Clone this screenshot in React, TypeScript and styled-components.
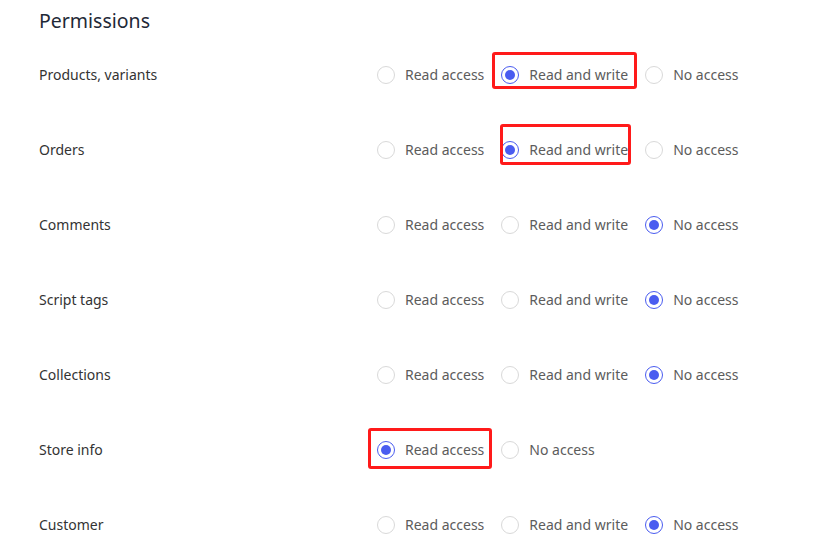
import styled, { createGlobalStyle, css } from "styled-components";

const GlobalStyle = createGlobalStyle`
	body {
		margin: 0;
		background: #ffffff;
		font-family: "Noto Sans", "Open Sans", sans-serif;
	}
`;

type Level = "read" | "write" | "none";

interface Permission {
	label: string;
	options: Level[];
	value: Level;
	marked?: boolean;
}

const optionText: Record<Level, string> = {
	read: "Read access",
	write: "Read and write",
	none: "No access",
};

const permissions: Permission[] = [
	{ label: "Products, variants", options: ["read", "write", "none"], value: "write", marked: true },
	{ label: "Orders", options: ["read", "write", "none"], value: "write", marked: true },
	{ label: "Comments", options: ["read", "write", "none"], value: "none" },
	{ label: "Script tags", options: ["read", "write", "none"], value: "none" },
	{ label: "Collections", options: ["read", "write", "none"], value: "none" },
	{ label: "Store info", options: ["read", "none"], value: "read", marked: true },
	{ label: "Customer", options: ["read", "write", "none"], value: "none" },
];

const App = () => {
	return (
		<Page>
			<GlobalStyle />
			<Title>Permissions</Title>
			<List>
				{permissions.map((perm, i) => (
					<Row key={perm.label}>
						<Label>{perm.label}</Label>
						<Group>
							{perm.options.map((opt) => {
								const checked = opt === perm.value;
								return (
									<Option key={opt} $marked={checked && perm.marked} $variant={i}>
										<Radio $checked={checked} />
										<OptionText>{optionText[opt]}</OptionText>
									</Option>
								);
							})}
						</Group>
					</Row>
				))}
			</List>
		</Page>
	);
};

export default App;

const Page = styled.div`
	padding: 8px 39px 0;
`;

const Title = styled.h2`
	margin: 0;
	font-size: 19.5px;
	font-weight: 400;
	color: #1f2937;
	line-height: 26px;
`;

const List = styled.div`
	display: flex;
	flex-direction: column;
	padding-top: 3px;
`;

const Row = styled.div`
	display: grid;
	grid-template-columns: 338px 1fr;
	align-items: center;
	height: 75px;
`;

const Label = styled.div`
	font-size: 14px;
	color: #333333;
`;

const Group = styled.div`
	display: flex;
	align-items: center;
	gap: 17px;
`;

const Option = styled.label<{ $marked?: boolean; $variant: number }>`
	position: relative;
	display: flex;
	align-items: center;
	gap: 10px;
	cursor: pointer;

	${({ $marked, $variant }) =>
		$marked &&
		css`
			&::after {
				content: "";
				position: absolute;
				border: 3px solid #ff1a1a;
				border-radius: 3px;
				${$variant === 0 &&
				css`
					left: -9px;
					right: -9px;
					top: -13px;
					bottom: -5px;
				`}
				${$variant === 1 &&
				css`
					left: -1px;
					right: -3px;
					top: -16px;
					bottom: -6px;
				`}
				${$variant === 5 &&
				css`
					left: -9px;
					right: -8px;
					top: -12px;
					bottom: -10px;
				`}
			}
		`}
`;

const Radio = styled.span<{ $checked: boolean }>`
	box-sizing: border-box;
	width: 18px;
	height: 18px;
	border-radius: 50%;
	border: 1px solid ${({ $checked }) => ($checked ? "#4a5cf0" : "#d9d9d9")};
	background: #ffffff;
	display: flex;
	align-items: center;
	justify-content: center;

	&::after {
		content: "";
		width: 10px;
		height: 10px;
		border-radius: 50%;
		background: #4a5cf0;
		display: ${({ $checked }) => ($checked ? "block" : "none")};
	}
`;

const OptionText = styled.span`
	font-size: 14px;
	color: #5c5c5c;
	white-space: nowrap;
`;
